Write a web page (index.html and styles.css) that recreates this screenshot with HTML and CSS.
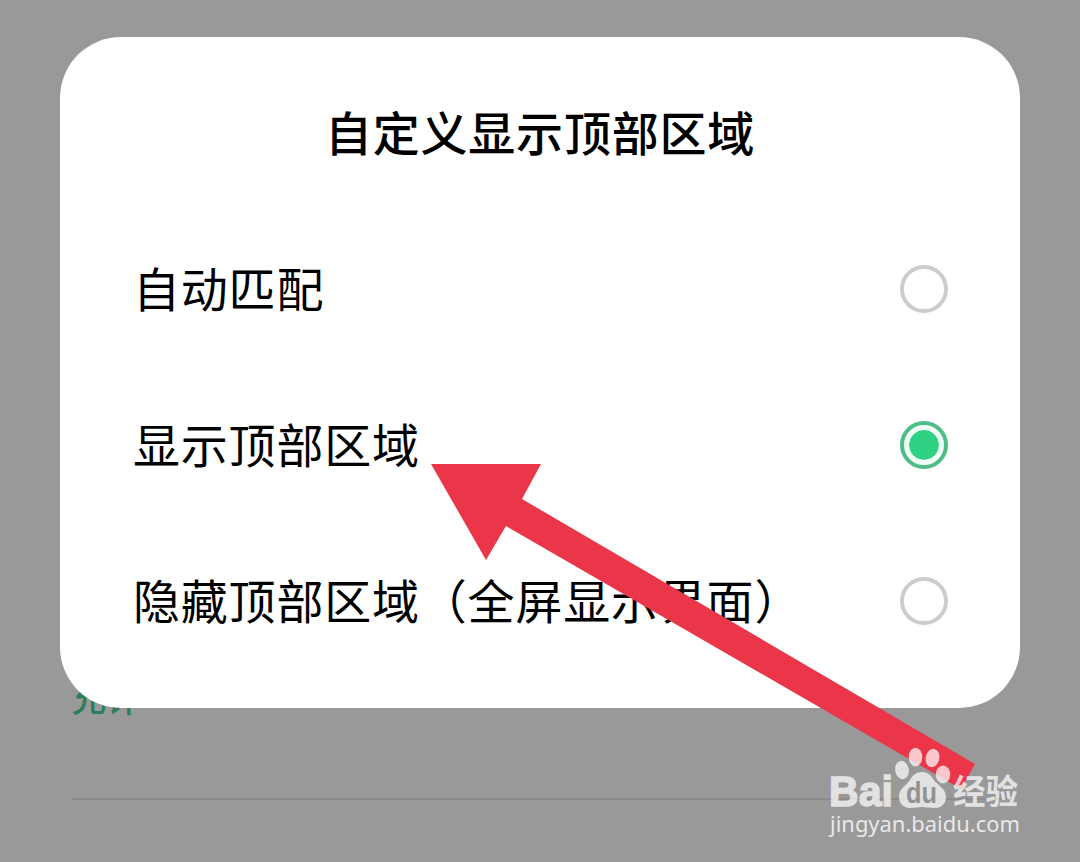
FILE: index.html
```
<!DOCTYPE html>
<html lang="zh-CN">

<head>
    <meta charset="UTF-8">
    <meta name="viewport" content="width=device-width, initial-scale=1.0">
    <title>自定义显示顶部区域</title>
    <link rel="stylesheet" href="styles.css">
</head>

<body>
    <div class="page">
        <div class="setting-item">
            <span class="setting-link">允许</span>
        </div>
    </div>

    <div class="dialog">
        <h1 class="dialog-title">自定义显示顶部区域</h1>
        <ul class="options">
            <li class="option">
                <span class="option-label">自动匹配</span>
                <span class="radio"></span>
            </li>
            <li class="option">
                <span class="option-label">显示顶部区域</span>
                <span class="radio checked"></span>
            </li>
            <li class="option">
                <span class="option-label">隐藏顶部区域（全屏显示界面）</span>
                <span class="radio"></span>
            </li>
        </ul>
    </div>

    <svg class="arrow" width="546" height="326" viewBox="430 464 546 326">
        <polygon points="431,464 541,464 522,499 975,764 961,789 506,526 486,560" fill="#ea3648" />
    </svg>

    <!-- Baidu watermark -->
    <svg class="watermark" width="210" height="100" viewBox="820 742 210 100">
        <g class="logo">
            <text class="logo-text" x="829" y="806" textLength="64" lengthAdjust="spacingAndGlyphs">Bai</text>
            <ellipse cx="902" cy="770" rx="6.8" ry="9.2" transform="rotate(-10 902 770)" />
            <ellipse cx="915.5" cy="757" rx="6.8" ry="9.3" />
            <ellipse cx="932.5" cy="758" rx="6.8" ry="9.3" transform="rotate(12 932.5 758)" />
            <ellipse cx="943" cy="774.5" rx="7.3" ry="8.9" />
            <path d="M922 772c-6 0-9 3-12 8-4 6-11 8-11 17 0 7 5 11 11 11 5 0 8-1 12-1s8 1 13 1c7 0 11-5 11-11 0-9-9-12-13-18-3-5-6-7-11-7z" />
            <text class="logo-cn" x="953" y="804" textLength="65" lengthAdjust="spacingAndGlyphs">经验</text>
        </g>
        <text class="logo-url" x="830" y="832" textLength="190" lengthAdjust="spacingAndGlyphs">jingyan.baidu.com</text>
        <text class="logo-du" x="906" y="803" textLength="31" lengthAdjust="spacingAndGlyphs">du</text>
    </svg>
</body>

</html>
```

FILE: styles.css
```
* {
    box-sizing: border-box;
}

body {
    position: relative;
    width: 1080px;
    height: 862px;
    margin: 0;
    overflow: hidden;
    background-color: #999;
    font-family: "Noto Sans CJK SC", sans-serif;
    color: #000;
}

.page {
    height: 800px;
    padding: 0 72px;
    display: flex;
    flex-direction: column;
    justify-content: flex-end;
}

.setting-item {
    height: 126px;
    border-bottom: 2px solid #8b8b8b;
}

.setting-link {
    display: block;
    font-size: 34px;
    font-weight: 500;
    line-height: 48px;
    color: #2b7e59;
}

.dialog {
    position: absolute;
    top: 37px;
    left: 60px;
    width: 960px;
    height: 671px;
    padding: 58px 72px 0;
    border-radius: 61px;
    background-color: #fff;
}

.dialog-title {
    margin: 0;
    font-size: 47px;
    font-weight: 500;
    line-height: 72px;
    letter-spacing: 0.8px;
    text-align: center;
}

.options {
    margin: 44px 0 0;
    padding: 0;
    list-style: none;
}

.option {
    display: flex;
    justify-content: space-between;
    align-items: center;
    height: 156px;
}

.option-label {
    padding: 0 0 5px 1px;
    font-size: 47px;
    line-height: 72px;
    letter-spacing: 0.8px;
    white-space: nowrap;
}

.radio {
    width: 48px;
    height: 48px;
    border: 4px solid #ccc;
    border-radius: 50%;
}

.radio.checked {
    padding: 5px;
    border-color: #4fbd88;
    background: #2fd283 content-box;
    box-shadow: inset 0 0 0 5px #effff6;
}

.arrow {
    position: absolute;
    top: 464px;
    left: 430px;
}

.watermark {
    position: absolute;
    top: 742px;
    left: 820px;
}

.logo {
    fill: #fff;
    opacity: 0.72;
}

.logo-text {
    font-family: "Liberation Sans", sans-serif;
    font-size: 43px;
    font-weight: bold;
    stroke: #fff;
    stroke-width: 1.5px;
}

.logo-cn {
    font-size: 34px;
    font-weight: bold;
}

.logo-url {
    font-family: "Noto Sans", sans-serif;
    font-size: 22px;
    fill: #fff;
    fill-opacity: 0.8;
}

.logo-du {
    font-family: "Liberation Sans", sans-serif;
    font-size: 29px;
    font-weight: bold;
    fill: #929292;
}
```
